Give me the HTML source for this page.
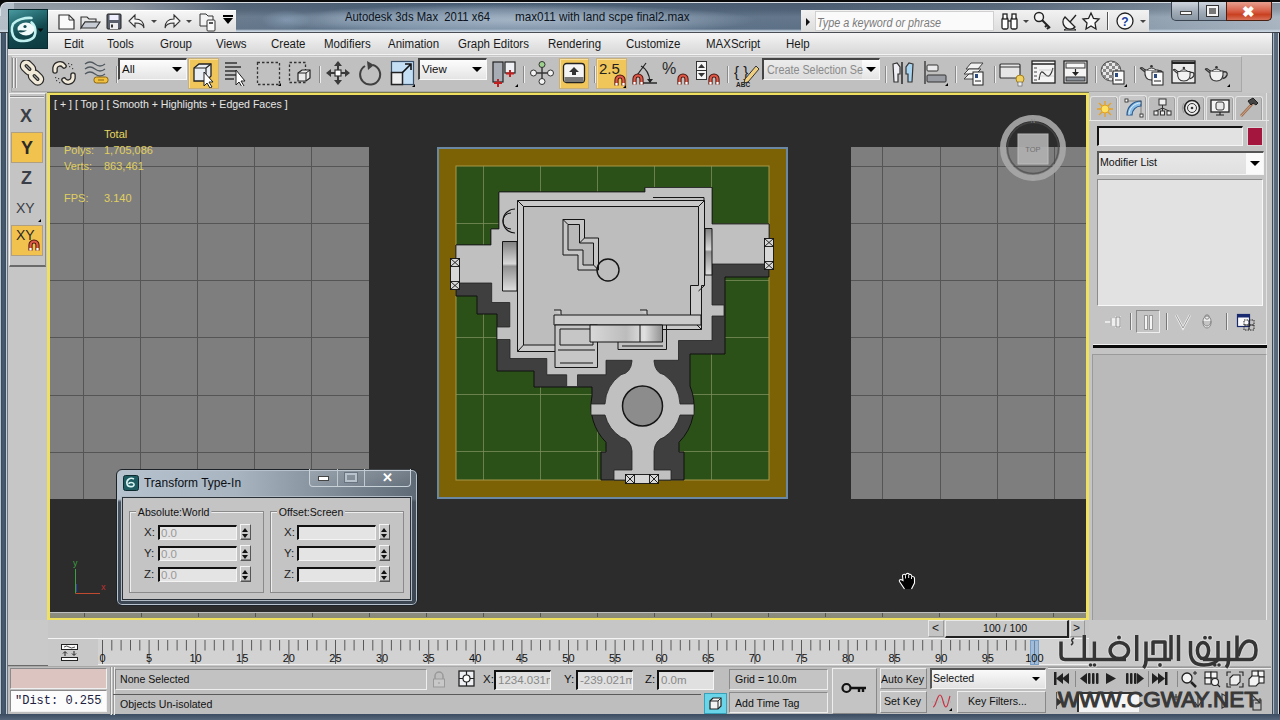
<!DOCTYPE html>
<html><head><meta charset="utf-8">
<style>
*{margin:0;padding:0;box-sizing:border-box}
html,body{width:1280px;height:720px;overflow:hidden;background:#0c0c0c}
body{position:relative;font-family:"Liberation Sans",sans-serif;font-size:12px;color:#111}
.a{position:absolute}
.t{position:absolute;white-space:nowrap;line-height:1;transform-origin:0 0}
.s9{transform:scaleX(0.9)}.s92{transform:scaleX(0.92)}.s95{transform:scaleX(0.95)}.s87{transform:scaleX(0.87)}
</style></head><body>
<!-- window frame -->
<div class="a" style="left:0;top:2px;width:1280px;height:718px;background:#9aa6b4;border-top:1px solid #d8dde3"></div>
<!-- title bar -->
<div class="a" id="title" style="left:0;top:3px;width:1280px;height:30px;background:linear-gradient(90deg,#b2bcc6 0px,#a6b0ba 130px,#627488 235px,#587088 420px,#5a6e84 800px,#6a7c90 1000px,#8e9eae 1160px,#a6b2be 1280px)"></div>
<div class="a" style="left:0;top:3px;width:1280px;height:30px;background:linear-gradient(rgba(20,30,45,0.22) 0,rgba(20,30,45,0.18) 6px,rgba(255,255,255,0.06) 14px,rgba(255,255,255,0.02) 26px,#c8d4e0 28px,#c8d4e0 29px,#3a4048 29px)"></div>
<div class="a" style="left:0;top:0;width:1280px;height:2px;background:#0a0a0a"></div>
<div class="a" style="left:0;top:2px;width:8px;height:8px;background:#0a0a0a"></div>
<div class="a" style="left:0;top:2px;width:14px;height:14px;border-radius:7px 0 0 0;background:#b4bec8;border-top:1px solid #dde2e8;border-left:1px solid #dde2e8"></div>
<div class="a" style="left:0;top:33px;width:8px;height:687px;background:linear-gradient(90deg,#b8c2cc 0,#b8c2cc 1px,#34465a 1px,#4a5c70 3px,#3c4e62 6px,#c4ccd4 6px,#c4ccd4 7px,#6a7682 7px)"></div>
<div class="a" style="left:1266px;top:33px;width:14px;height:687px;background:linear-gradient(90deg,#e2e2e2 0,#e2e2e2 1px,#c2c2c2 1px,#c2c2c2 6px,#404a54 6px,#404a54 7px,#a8b8c8 7px,#a8b8c8 8px,#5e6e7e 8px,#56667a 12px,#d0d8e0 12px,#d0d8e0 13px,#0a0a0a 13px)"></div>
<div class="a" style="left:0;top:714px;width:1280px;height:6px;background:linear-gradient(#3c4c60,#56677b)"></div>
<div class="a" style="left:236px;top:4px;width:565px;height:27px;background:radial-gradient(ellipse 240px 16px at 280px 16px,rgba(185,200,215,0.75),rgba(175,192,210,0.45) 65%,transparent),radial-gradient(ellipse 25px 10px at 50px 16px,rgba(150,175,200,0.5),transparent),radial-gradient(ellipse 30px 10px at 110px 14px,rgba(150,170,190,0.3),transparent)"></div>
<div class="t s87" style="left:345px;top:10px;font-size:13px;color:#0c1420">Autodesk 3ds Max&nbsp; 2011 x64</div>
<div class="t s9" style="left:515px;top:10px;font-size:13px;color:#0c1420">max011 with land scpe final2.max</div>
<!-- menu bar -->
<div class="a" style="left:8px;top:32px;width:1264px;height:1px;background:#4a4e54"></div><div class="a" style="left:8px;top:33px;width:1264px;height:22px;background:linear-gradient(#f6f6f6,#e6e6e6 50%,#d8d8d8);border-bottom:1px solid #f2f2f2"></div>

<!-- title bar details -->

<div class="a" style="left:8px;top:9px;width:40px;height:40px;background:linear-gradient(160deg,#4a9aa0 0%,#2a7278 25%,#12484e 55%,#0c3a40 100%);border:1px solid #0a2a30"></div>
<svg class="a" style="left:8px;top:9px" width="41" height="41" viewBox="0 0 41 41">
 <path d="M23.5,9 C17,8.5 8.5,10.5 5,15 C3,19 3.5,26 7,29.5 C11,33 21,33 25.5,28.5 C28.5,24.5 28,17 23.5,13.5" fill="none" stroke="#c0f0f0" stroke-width="2.6" stroke-linecap="round"/>
 <ellipse cx="18" cy="20" rx="8.5" ry="6.5" fill="#f0fafa"/>
 <path d="M9,22 C12,20.5 16,22 19,21.5 C15,24 11,24 9,22 Z" fill="#154a50"/>
 <circle cx="17" cy="17.5" r="1.6" fill="#154a50"/>
 <path d="M29.5,19.5 h6 l-3,3.5 z" fill="#0a0a0a"/>
</svg>
<div class="a" style="left:48px;top:10px;width:188px;height:22px;background:linear-gradient(#f6f6f6,#dedede);border-top:1px solid #fff"></div>
<div class="a" style="left:801px;top:10px;width:348px;height:22px;background:linear-gradient(#f2f2f2,#dcdcdc)"></div>
<div class="a" style="left:815px;top:11px;width:179px;height:20px;background:#fafafa;border:1px solid #d0d0d0"></div>
<div class="a" style="left:806px;top:18px;width:0;height:0;border-top:4px solid transparent;border-bottom:4px solid transparent;border-left:4px solid #111"></div>
<div class="t s9" style="left:817px;top:17px;font-size:12px;font-style:italic;color:#7a7a7a">Type a keyword or phrase</div>
<svg class="a" style="left:57px;top:12px" width="20" height="19" viewBox="0 0 20 19"><path d="M2,3 H12 L17,8 V17 H2 Z" fill="#fafafa" stroke="#333" stroke-width="1.2"/><path d="M12,3 V8 H17" fill="none" stroke="#333"/></svg>
<svg class="a" style="left:80px;top:12px" width="22" height="19" viewBox="0 0 22 19"><path d="M1,5 H7 L9,7 H16 V10 H5 L1,16 Z" fill="#e8e8e8" stroke="#333" stroke-width="1.1"/><path d="M5,10 H20 L16,16 H1 Z" fill="#c8ccd4" stroke="#333" stroke-width="1.1"/></svg>
<svg class="a" style="left:105px;top:12px" width="18" height="19" viewBox="0 0 18 19"><rect x="2" y="2" width="14" height="15" rx="1" fill="#5a606c" stroke="#222"/><rect x="4.5" y="3" width="9" height="5" fill="#eef"/><rect x="5" y="11" width="8" height="6" fill="#eee"/><rect x="6" y="12.5" width="2" height="3" fill="#333"/></svg>
<svg class="a" style="left:127px;top:12px" width="20" height="19" viewBox="0 0 20 19"><path d="M8,3 L2,9 L8,15 V11 C13,11 16,12 17,16 C17,10 14,7 8,7 Z" fill="#f4f4f4" stroke="#333" stroke-width="1.1"/></svg>
<div class="a" style="left:151px;top:20px;width:0;height:0;border-left:3px solid transparent;border-right:3px solid transparent;border-top:3px solid #444"></div>
<svg class="a" style="left:162px;top:12px" width="20" height="19" viewBox="0 0 20 19"><path d="M12,3 L18,9 L12,15 V11 C7,11 4,12 3,16 C3,10 6,7 12,7 Z" fill="#f4f4f4" stroke="#333" stroke-width="1.1"/></svg>
<div class="a" style="left:186px;top:20px;width:0;height:0;border-left:3px solid transparent;border-right:3px solid transparent;border-top:3px solid #444"></div>
<svg class="a" style="left:198px;top:11px" width="22" height="21" viewBox="0 0 22 21"><path d="M2,3 H8 L10,5 H15 V15 H2 Z" fill="#f4f4f4" stroke="#333"/><rect x="9" y="9" width="8" height="11" rx="1" fill="#f8f8f8" stroke="#333"/><rect x="11" y="11" width="4" height="2" fill="#555"/></svg>
<div class="a" style="left:223px;top:18px;width:0;height:0;border-left:5px solid transparent;border-right:5px solid transparent;border-top:6px solid #000;border-bottom:0"></div><div class="a" style="left:223px;top:15px;width:10px;height:2px;background:#000"></div>
<svg class="a" style="left:1000px;top:12px" width="22" height="19" viewBox="0 0 22 19"><g fill="#fff" stroke="#222" stroke-width="1.3"><rect x="2" y="6" width="6" height="11" rx="1.5"/><rect x="11" y="6" width="6" height="11" rx="1.5"/><rect x="3" y="2" width="4" height="5"/><rect x="12" y="2" width="4" height="5"/><path d="M8,9 H11"/></g></svg>
<div class="a" style="left:1023px;top:20px;width:0;height:0;border-left:3px solid transparent;border-right:3px solid transparent;border-top:3px solid #444"></div>
<svg class="a" style="left:1033px;top:11px" width="20" height="20" viewBox="0 0 20 20"><circle cx="6" cy="6" r="4.5" fill="#f4f4f4" stroke="#222" stroke-width="1.4"/><path d="M9,9 L17,17 M14,14 L12,16 M16,16 L14,18" stroke="#222" stroke-width="2"/></svg>
<svg class="a" style="left:1061px;top:11px" width="20" height="20" viewBox="0 0 20 20"><path d="M4,6 A7,7 0 0 0 14,16 Z" fill="#f4f4f4" stroke="#222" stroke-width="1.3"/><path d="M9,11 L15,4" stroke="#222" stroke-width="1.3"/><path d="M6,17 L3,19 H15 L12,17" fill="none" stroke="#222"/></svg>
<svg class="a" style="left:1081px;top:11px" width="20" height="20" viewBox="0 0 20 20"><path d="M10,2 L12.5,7.5 L18,8 L14,12 L15,18 L10,15 L5,18 L6,12 L2,8 L7.5,7.5 Z" fill="#fafafa" stroke="#222" stroke-width="1.3"/></svg>
<div class="a" style="left:1107px;top:12px;width:1px;height:18px;background:#555;box-shadow:1px 0 0 #fff"></div>
<svg class="a" style="left:1115px;top:11px" width="20" height="20" viewBox="0 0 20 20"><circle cx="10" cy="10" r="8" fill="#fafafa" stroke="#222" stroke-width="1.3"/><text x="10" y="14.5" font-size="12" font-weight="bold" text-anchor="middle" fill="#1a3ea0" font-family="Liberation Sans">?</text></svg>
<div class="a" style="left:1140px;top:20px;width:0;height:0;border-left:3px solid transparent;border-right:3px solid transparent;border-top:3px solid #444"></div>
<!-- caption buttons -->
<div class="a" style="left:1171px;top:2px;width:101px;height:19px;border:1px solid #3a4450;border-top:none;border-radius:0 0 5px 5px;background:linear-gradient(#d0d6de,#a4aeba 50%,#8a96a4)"></div>
<div class="a" style="left:1226px;top:2px;width:46px;height:19px;border:1px solid #4a2010;border-top:none;border-radius:0 0 5px 0;background:linear-gradient(#e8a090,#d86048 50%,#c84020 70%,#d87058)"></div>
<div class="a" style="left:1198px;top:2px;width:1px;height:18px;background:#3a4450"></div>
<div class="a" style="left:1180px;top:11px;width:12px;height:4px;background:#f8f8f8;border:1px solid #444"></div>
<div class="a" style="left:1207px;top:6px;width:11px;height:10px;border:2px solid #f4f4f4;outline:1px solid #333;background:#777"></div>
<div class="t" style="left:1242px;top:4px;font-size:15px;font-weight:bold;color:#fff">&#x2716;</div>
<!-- menu -->
<div class="t s92" style="left:64px;top:38px;font-size:12.5px;color:#1a1a1a">Edit</div>
<div class="t s92" style="left:107px;top:38px;font-size:12.5px;color:#1a1a1a">Tools</div>
<div class="t s92" style="left:160px;top:38px;font-size:12.5px;color:#1a1a1a">Group</div>
<div class="t s92" style="left:216px;top:38px;font-size:12.5px;color:#1a1a1a">Views</div>
<div class="t s92" style="left:271px;top:38px;font-size:12.5px;color:#1a1a1a">Create</div>
<div class="t s92" style="left:324px;top:38px;font-size:12.5px;color:#1a1a1a">Modifiers</div>
<div class="t s92" style="left:388px;top:38px;font-size:12.5px;color:#1a1a1a">Animation</div>
<div class="t s92" style="left:458px;top:38px;font-size:12.5px;color:#1a1a1a">Graph Editors</div>
<div class="t s92" style="left:548px;top:38px;font-size:12.5px;color:#1a1a1a">Rendering</div>
<div class="t s92" style="left:626px;top:38px;font-size:12.5px;color:#1a1a1a">Customize</div>
<div class="t s92" style="left:706px;top:38px;font-size:12.5px;color:#1a1a1a">MAXScript</div>
<div class="t s92" style="left:786px;top:38px;font-size:12.5px;color:#1a1a1a">Help</div>
<!-- main toolbar -->
<div class="a" style="left:8px;top:55px;width:1263px;height:38px;background:#c6c6c6"></div>
<div class="a" style="left:11px;top:56px;width:1231px;height:36px;background:#c0c0c0;border:1px solid #a8a8a8;border-top-color:#e0e0e0"></div>
<!-- toolbar icons -->
<div class="a" style="left:12px;top:58px;width:1px;height:30px;background:#888;box-shadow:1px 0 0 #eee,3px 0 0 #888,4px 0 0 #eee"></div>
<svg class="a" style="left:19px;top:60px" width="26" height="26" viewBox="0 0 26 26"><g fill="none" stroke="#2a2a2a" stroke-width="6"><rect x="3" y="4" width="12" height="7" rx="3.5" transform="rotate(45 9 7.5)"/><rect x="11" y="14" width="12" height="7" rx="3.5" transform="rotate(45 17 17.5)"/></g><g fill="none" stroke="#f2ead8" stroke-width="3.6"><rect x="3" y="4" width="12" height="7" rx="3.5" transform="rotate(45 9 7.5)"/><rect x="11" y="14" width="12" height="7" rx="3.5" transform="rotate(45 17 17.5)"/></g></svg>
<svg class="a" style="left:51px;top:60px" width="26" height="26" viewBox="0 0 26 26"><g fill="none" stroke="#2a2a2a" stroke-width="5.6" stroke-linecap="round"><path d="M4,11 V8 A5,5 0 0 1 13,6"/><path d="M22,15 V18 A5,5 0 0 1 13,20"/></g><g fill="none" stroke="#f2ead8" stroke-width="3" stroke-linecap="round"><path d="M4,11 V8 A5,5 0 0 1 13,6"/><path d="M22,15 V18 A5,5 0 0 1 13,20"/></g><g fill="#444"><rect x="17" y="3" width="1.2" height="1.2"/><rect x="20" y="4" width="1.2" height="1.2"/><rect x="18" y="6" width="1.2" height="1.2"/><rect x="21" y="8" width="1.2" height="1.2"/><rect x="4" y="17" width="1.2" height="1.2"/><rect x="7" y="18" width="1.2" height="1.2"/><rect x="5" y="20" width="1.2" height="1.2"/><rect x="8" y="22" width="1.2" height="1.2"/></g></svg>
<svg class="a" style="left:84px;top:60px" width="26" height="26" viewBox="0 0 26 26"><g fill="none" stroke="#505860" stroke-width="1.3"><path d="M1,4 Q6,0 11,4 T21,4"/><path d="M1,9 Q6,5 11,9 T21,9"/><path d="M1,14 Q6,10 11,14 T21,14"/></g><rect x="10" y="17" width="14" height="6" rx="2.5" fill="#f0c040" stroke="#8a6410" stroke-width="1"/><path d="M14,20 h6" stroke="#8a6410"/></svg>
<div class="a" style="left:116px;top:66px;width:1px;height:17px;background:#8a8a8a;box-shadow:1px 0 0 #eee"></div>
<div class="a" style="left:118px;top:58px;width:69px;height:22px;background:linear-gradient(#fdfdfd,#e4e4e4);border-top:2px solid #444;border-left:2px solid #444;border-right:1px solid #f8f8f8;border-bottom:1px solid #f8f8f8"></div>
<div class="t" style="left:122px;top:64px;font-size:11.5px;color:#111">All</div>
<div class="a" style="left:172px;top:67px;width:0;height:0;border-left:5px solid transparent;border-right:5px solid transparent;border-top:5px solid #000"></div>
<div class="a" style="left:188px;top:58px;width:31px;height:31px;background:#f0c65a;border:1px solid #c8b078;box-shadow:inset 1px 1px 0 #f8e0a0"></div>
<svg class="a" style="left:190px;top:60px" width="28" height="28" viewBox="0 0 28 28"><path d="M4,8 L9,4 H21 V16 L16,21 H4 Z" fill="#e8eef4" stroke="#222" stroke-width="1.3"/><path d="M4,8 H16 V21 M16,8 L21,4" fill="none" stroke="#222" stroke-width="1.2"/><path d="M14,12 V26 L17,23 L20,28 L22,27 L19,22 L23,22 Z" fill="#fff" stroke="#222" stroke-width="1"/></svg>
<svg class="a" style="left:224px;top:60px" width="26" height="26" viewBox="0 0 26 26"><g stroke="#333" stroke-width="1.3"><path d="M1,3 H13 M1,7 H17 M1,11 H12 M1,15 H15 M1,19 H10"/></g><path d="M12,10 V25 L15,22 L18,27 L20,26 L17,21 L21,21 Z" fill="#fff" stroke="#222" stroke-width="1"/></svg>
<svg class="a" style="left:256px;top:61px" width="26" height="26" viewBox="0 0 26 26"><rect x="1.5" y="1.5" width="22" height="22" fill="none" stroke="#333" stroke-width="1.3" stroke-dasharray="2.5,2"/><path d="M22,25 l3,0 l0,-3 z" fill="#000"/></svg>
<svg class="a" style="left:288px;top:61px" width="26" height="26" viewBox="0 0 26 26"><rect x="1.5" y="1.5" width="16" height="20" fill="none" stroke="#333" stroke-width="1.3" stroke-dasharray="2.5,2"/><path d="M10,12 L14,9 H22 V17 L18,20 H10 Z" fill="#eaeaea" stroke="#222" stroke-width="1.2"/><path d="M10,12 H18 V20 M18,12 L22,9" fill="none" stroke="#222"/></svg>
<div class="a" style="left:319px;top:66px;width:1px;height:17px;background:#8a8a8a;box-shadow:1px 0 0 #eee"></div>
<svg class="a" style="left:326px;top:61px" width="24" height="24" viewBox="0 0 24 24"><g fill="#3a3a3a"><path d="M12,0 L16,5 H8 Z"/><path d="M12,24 L16,19 H8 Z"/><path d="M0,12 L5,8 V16 Z"/><path d="M24,12 L19,8 V16 Z"/><rect x="11" y="4" width="2" height="16"/><rect x="4" y="11" width="16" height="2"/></g><rect x="9" y="9" width="6" height="6" fill="#fff" stroke="#333" stroke-width="1.2"/></svg>
<svg class="a" style="left:357px;top:60px" width="25" height="26" viewBox="0 0 25 26"><path d="M8,6 A10,10 0 1 0 16,5" fill="none" stroke="#404040" stroke-width="2"/><path d="M10,1 L17,5 L11,10 Z" fill="#404040"/></svg>
<svg class="a" style="left:390px;top:60px" width="26" height="28" viewBox="0 0 26 28"><rect x="1.5" y="1.5" width="22" height="23" fill="#c4def4" stroke="#3a5068" stroke-width="1.2"/><rect x="1.5" y="12.5" width="11" height="12" fill="#eee" stroke="#222" stroke-width="1.5"/><path d="M12,13 L21,4 M15,4 H21 V10" fill="none" stroke="#111" stroke-width="1.6"/><path d="M22,27 l3,0 l0,-3 z" fill="#000"/></svg>
<div class="a" style="left:418px;top:58px;width:69px;height:22px;background:linear-gradient(#fdfdfd,#e4e4e4);border-top:2px solid #444;border-left:2px solid #444;border-right:1px solid #f8f8f8;border-bottom:1px solid #f8f8f8"></div>
<div class="t" style="left:422px;top:64px;font-size:11.5px;color:#111">View</div>
<div class="a" style="left:472px;top:67px;width:0;height:0;border-left:5px solid transparent;border-right:5px solid transparent;border-top:5px solid #000"></div>
<svg class="a" style="left:491px;top:60px" width="30" height="28" viewBox="0 0 30 28"><rect x="2" y="2" width="10" height="20" fill="#a8acb4" stroke="#222" stroke-width="1.2"/><rect x="14" y="2" width="10" height="11" fill="#eef0f4" stroke="#222" stroke-width="1.2"/><g stroke="#c02020" stroke-width="2"><path d="M7,19 v8 M3,23 h8"/><path d="M19,10 v7 M15,13.5 h8"/></g><path d="M24,27 l3,0 l0,-3 z" fill="#000"/></svg>
<div class="a" style="left:523px;top:66px;width:1px;height:17px;background:#8a8a8a;box-shadow:1px 0 0 #eee"></div>
<svg class="a" style="left:530px;top:61px" width="24" height="24" viewBox="0 0 24 24"><path d="M12,4 V20 M3,12 H21" stroke="#333" stroke-width="1.4"/><circle cx="12" cy="3.5" r="3" fill="#9cd08c" stroke="#333"/><circle cx="3.5" cy="12" r="3" fill="#f4f4f4" stroke="#333"/><circle cx="20.5" cy="12" r="3" fill="#f4f4f4" stroke="#333"/><circle cx="12" cy="20.5" r="3" fill="#f4f4f4" stroke="#333"/></svg>
<div class="a" style="left:559px;top:58px;width:30px;height:31px;background:#f0c65a;border:1px solid #c8b078;box-shadow:inset 1px 1px 0 #f8e0a0"></div>
<svg class="a" style="left:562px;top:62px" width="25" height="23" viewBox="0 0 25 23"><rect x="1.5" y="1.5" width="21" height="19" rx="3" fill="#f4f4f4" stroke="#222" stroke-width="1.3"/><rect x="2.5" y="15" width="19" height="5" fill="#777"/><path d="M12,5 L17,10 H14 V13 H10 V10 H7 Z" fill="#333"/></svg>
<div class="a" style="left:594px;top:66px;width:1px;height:17px;background:#8a8a8a;box-shadow:1px 0 0 #eee"></div>
<div class="a" style="left:596px;top:58px;width:31px;height:31px;background:#f0c65a;border:1px solid #c8b078;box-shadow:inset 1px 1px 0 #f8e0a0"></div>
<div class="t" style="left:599px;top:61px;font-size:15px;color:#222">2.5</div>
<svg class="a" style="left:614px;top:74px" width="12" height="13" viewBox="0 0 12 13"><path d="M2.5,11.5 V6 A3.5,3.5 0 0 1 9.5,6 V11.5" fill="none" stroke="#4a1810" stroke-width="4.2"/><path d="M2.5,11.5 V6 A3.5,3.5 0 0 1 9.5,6 V11.5" fill="none" stroke="#e05848" stroke-width="2.2"/><path d="M2.5,9 V11.5 M9.5,9 V11.5" stroke="#fff" stroke-width="2.2"/></svg>
<div class="a" style="left:623px;top:85px;width:0;height:0;border-left:3px solid transparent;border-bottom:3px solid #000"></div>
<svg class="a" style="left:632px;top:60px" width="26" height="26" viewBox="0 0 26 26"><path d="M3,18 L14,3" stroke="#222" stroke-width="1.2"/><path d="M9,6 Q17,10 18,22" fill="none" stroke="#222" stroke-width="1.2"/><path d="M15,19 L18,23 L21,19" fill="#222"/><path d="M11,23 H25" stroke="#111" stroke-width="1.3"/></svg>
<svg class="a" style="left:632px;top:73px" width="12" height="13" viewBox="0 0 12 13"><path d="M2.5,11.5 V6 A3.5,3.5 0 0 1 9.5,6 V11.5" fill="none" stroke="#4a1810" stroke-width="4.2"/><path d="M2.5,11.5 V6 A3.5,3.5 0 0 1 9.5,6 V11.5" fill="none" stroke="#e05848" stroke-width="2.2"/><path d="M2.5,9 V11.5 M9.5,9 V11.5" stroke="#fff" stroke-width="2.2"/></svg>
<div class="t" style="left:662px;top:61px;font-size:16px;color:#2a2a2a">%</div>
<svg class="a" style="left:677px;top:73px" width="12" height="13" viewBox="0 0 12 13"><path d="M2.5,11.5 V6 A3.5,3.5 0 0 1 9.5,6 V11.5" fill="none" stroke="#4a1810" stroke-width="4.2"/><path d="M2.5,11.5 V6 A3.5,3.5 0 0 1 9.5,6 V11.5" fill="none" stroke="#e05848" stroke-width="2.2"/><path d="M2.5,9 V11.5 M9.5,9 V11.5" stroke="#fff" stroke-width="2.2"/></svg>
<svg class="a" style="left:696px;top:61px" width="12" height="20" viewBox="0 0 12 20"><rect x="0.5" y="0.5" width="10" height="18" fill="#f4f4f4" stroke="#333"/><path d="M0,9.5 H11" stroke="#333"/><path d="M2,7 L5.5,3 L9,7 Z M2,12 L5.5,16 L9,12 Z" fill="#333"/></svg>
<svg class="a" style="left:708px;top:73px" width="12" height="13" viewBox="0 0 12 13"><path d="M2.5,11.5 V6 A3.5,3.5 0 0 1 9.5,6 V11.5" fill="none" stroke="#4a1810" stroke-width="4.2"/><path d="M2.5,11.5 V6 A3.5,3.5 0 0 1 9.5,6 V11.5" fill="none" stroke="#e05848" stroke-width="2.2"/><path d="M2.5,9 V11.5 M9.5,9 V11.5" stroke="#fff" stroke-width="2.2"/></svg>
<div class="a" style="left:727px;top:66px;width:1px;height:17px;background:#8a8a8a;box-shadow:1px 0 0 #eee"></div>
<svg class="a" style="left:734px;top:60px" width="26" height="28" viewBox="0 0 26 28"><text x="0" y="17" font-size="15" fill="#222" font-family="Liberation Sans">{ }</text><path d="M11,19 L22,6 L25,9 L14,22 L10,23 Z" fill="#f0d080" stroke="#333"/><text x="2" y="27" font-size="6.5" font-weight="bold" fill="#222" font-family="Liberation Sans">ABC</text></svg>
<div class="a" style="left:762px;top:58px;width:118px;height:22px;background:linear-gradient(#fdfdfd,#e4e4e4);border-top:2px solid #444;border-left:2px solid #444;border-right:1px solid #f8f8f8;border-bottom:1px solid #f8f8f8"></div>
<div class="a" style="left:764px;top:60px;width:98px;height:19px;background:linear-gradient(#ececec,#dcdcdc)"></div><div class="t" style="left:767px;top:64px;font-size:12px;color:#8a8a8a;transform:scaleX(0.9)">Create Selection Se</div>
<div class="a" style="left:866px;top:67px;width:0;height:0;border-left:5px solid transparent;border-right:5px solid transparent;border-top:5px solid #000"></div>
<div class="a" style="left:885px;top:66px;width:1px;height:17px;background:#8a8a8a;box-shadow:1px 0 0 #eee"></div>
<svg class="a" style="left:891px;top:61px" width="26" height="24" viewBox="0 0 26 24"><path d="M2,3 L6,2 L9,6 V13 L7,13 V21 H3 Z" fill="#f0f0f4" stroke="#333" stroke-width="1.2"/><path d="M11,1 V23" stroke="#111" stroke-width="1.3"/><path d="M22,3 L18,2 L15,6 V13 L17,13 V21 H21 Z" fill="#a8d4f0" stroke="#333" stroke-width="1.2"/></svg>
<svg class="a" style="left:924px;top:61px" width="26" height="26" viewBox="0 0 26 26"><path d="M1,0 V23" stroke="#222" stroke-width="1.2"/><rect x="3" y="4" width="11" height="6" rx="1" fill="#eaeaec" stroke="#333"/><rect x="3" y="14" width="19" height="7" rx="1" fill="#9a9ca4" stroke="#333"/><path d="M21,25 l3,0 l0,-3 z" fill="#000"/></svg>
<div class="a" style="left:955px;top:66px;width:1px;height:17px;background:#8a8a8a;box-shadow:1px 0 0 #eee"></div>
<svg class="a" style="left:961px;top:60px" width="26" height="28" viewBox="0 0 26 28"><g fill="#f2f2f2" stroke="#444"><path d="M5,9 L10,3 H22 L17,9 Z"/><path d="M3,14 L8,9 H20 L15,14 Z"/><path d="M3,19 L8,14 H20 L15,19 Z"/></g><rect x="12" y="12" width="10" height="13" fill="#fafafa" stroke="#222"/><rect x="14" y="14" width="3" height="4" fill="#2a4a80"/><path d="M14,21 H20" stroke="#222"/></svg>
<div class="a" style="left:994px;top:66px;width:1px;height:17px;background:#8a8a8a;box-shadow:1px 0 0 #eee"></div>
<svg class="a" style="left:999px;top:60px" width="26" height="28" viewBox="0 0 26 28"><rect x="1" y="4" width="20" height="14" rx="1" fill="#e6e6e6" stroke="#333" stroke-width="1.2"/><path d="M1,7 H21" stroke="#333"/><circle cx="21" cy="19" r="4" fill="#f0d060" stroke="#a08020"/><rect x="19" y="22" width="4" height="4" fill="#eee" stroke="#555" stroke-width="0.6"/></svg>
<svg class="a" style="left:1031px;top:60px" width="26" height="26" viewBox="0 0 26 26"><rect x="1" y="1" width="23" height="22" fill="#f4f4f4" stroke="#222" stroke-width="1.3"/><path d="M1,4 H24" stroke="#222" stroke-width="1.5"/><g stroke="#444"><path d="M3,8 h3 M3,12 h3 M3,16 h3 M3,20 h3"/></g><path d="M8,20 C11,-2 16,30 22,8" fill="none" stroke="#333" stroke-width="1.1"/><path d="M8,10 H23 M8,16 H23" stroke="#bbb" stroke-width="0.6"/></svg>
<svg class="a" style="left:1063px;top:60px" width="26" height="26" viewBox="0 0 26 26"><rect x="1" y="1" width="23" height="22" fill="#f4f4f4" stroke="#222" stroke-width="1.3"/><rect x="3" y="3" width="19" height="5" fill="#f8f8f8" stroke="#333"/><path d="M12.5,9 V14" stroke="#222" stroke-width="1.2"/><path d="M9,12 L12.5,16 L16,12 Z" fill="#222"/><rect x="3" y="17" width="19" height="4" fill="#8a9098" stroke="#333"/></svg>
<div class="a" style="left:1095px;top:66px;width:1px;height:17px;background:#8a8a8a;box-shadow:1px 0 0 #eee"></div>
<svg class="a" style="left:1100px;top:60px" width="28" height="28" viewBox="0 0 28 28"><defs><pattern id="chk" width="6" height="6" patternUnits="userSpaceOnUse"><rect width="6" height="6" fill="#e8e8e8"/><rect width="3" height="3" fill="#888"/><rect x="3" y="3" width="3" height="3" fill="#888"/></pattern></defs><circle cx="11" cy="11" r="10" fill="url(#chk)" stroke="#555"/><rect x="13" y="11" width="11" height="13" fill="#fafafa" stroke="#222"/><rect x="15" y="13" width="3" height="4" fill="#2a4a80"/><path d="M15,20 H22" stroke="#222"/><path d="M24,27 l3,0 l0,-3 z" fill="#000"/></svg>
<div class="a" style="left:1134px;top:66px;width:1px;height:17px;background:#8a8a8a;box-shadow:1px 0 0 #eee"></div>
<svg class="a" style="left:1139px;top:60px" width="28" height="28" viewBox="0 0 28 28"><g transform="translate(0,2) scale(1.0)"><path d="M1,6 L6,10 M1,6 L3,5.5 L7,8.5" fill="none" stroke="#333" stroke-width="1.1"/><path d="M19,9 Q24,8 23,12 Q22,15 18.5,15.5" fill="none" stroke="#333" stroke-width="1.4"/><path d="M6,8 Q5,18 12.5,18 Q20,18 19,8 Z" fill="#f2f2f2" stroke="#333" stroke-width="1.1"/><path d="M8,8 Q12.5,4 17,8" fill="#e8e8e8" stroke="#333" stroke-width="1"/><circle cx="12.5" cy="4.3" r="1.3" fill="#333"/></g><rect x="13" y="12" width="11" height="13" fill="#fafafa" stroke="#222"/><rect x="15" y="14" width="3" height="4" fill="#2a4a80"/><path d="M15,21 H22" stroke="#222"/></svg>
<svg class="a" style="left:1171px;top:60px" width="26" height="26" viewBox="0 0 26 26"><rect x="1" y="1" width="23" height="22" fill="#eaeaea" stroke="#222" stroke-width="1.3"/><path d="M1,3 H24" stroke="#222" stroke-width="2"/><g transform="translate(1,4) scale(0.95)"><path d="M1,6 L6,10 M1,6 L3,5.5 L7,8.5" fill="none" stroke="#333" stroke-width="1.1"/><path d="M19,9 Q24,8 23,12 Q22,15 18.5,15.5" fill="none" stroke="#333" stroke-width="1.4"/><path d="M6,8 Q5,18 12.5,18 Q20,18 19,8 Z" fill="#f2f2f2" stroke="#333" stroke-width="1.1"/><path d="M8,8 Q12.5,4 17,8" fill="#e8e8e8" stroke="#333" stroke-width="1"/><circle cx="12.5" cy="4.3" r="1.3" fill="#333"/></g></svg>
<svg class="a" style="left:1203px;top:61px" width="28" height="28" viewBox="0 0 28 28"><g transform="translate(1,2) scale(1.0)"><path d="M1,6 L6,10 M1,6 L3,5.5 L7,8.5" fill="none" stroke="#333" stroke-width="1.1"/><path d="M19,9 Q24,8 23,12 Q22,15 18.5,15.5" fill="none" stroke="#333" stroke-width="1.4"/><path d="M6,8 Q5,18 12.5,18 Q20,18 19,8 Z" fill="#f2f2f2" stroke="#333" stroke-width="1.1"/><path d="M8,8 Q12.5,4 17,8" fill="#e8e8e8" stroke="#333" stroke-width="1"/><circle cx="12.5" cy="4.3" r="1.3" fill="#333"/></g><path d="M24,26 l3,0 l0,-3 z" fill="#000"/></svg>
<!-- left axis bar -->
<div class="a" style="left:8px;top:93px;width:40px;height:527px;background:#c6c6c6"></div>

<div class="a" style="left:9px;top:93px;width:37px;height:174px;border:1px solid #f0f0f0;border-right-color:#8a8a8a;border-bottom:2px solid #6a6a6a;background:#c4c4c4"></div><div class="a" style="left:10px;top:96px;width:34px;height:1px;background:#8a8a8a;box-shadow:0 1px 0 #eee"></div>
<div class="t" style="left:20px;top:107px;font-size:18px;font-weight:bold;color:#3a3e46">X</div>
<div class="a" style="left:11px;top:132px;width:32px;height:31px;background:#f2c24e;border:1px solid #b0a080"></div>
<div class="t" style="left:21px;top:139px;font-size:18px;font-weight:bold;color:#2a2a2a">Y</div>
<div class="t" style="left:21px;top:169px;font-size:18px;font-weight:bold;color:#3a3e46">Z</div>
<div class="t" style="left:16px;top:201px;font-size:14px;color:#3a3e46">XY</div>
<div class="a" style="left:38px;top:219px;width:0;height:0;border-left:3px solid transparent;border-bottom:3px solid #000"></div>
<div class="a" style="left:11px;top:225px;width:32px;height:31px;background:#f2c24e;border:1px solid #b0a080"></div>
<div class="t" style="left:16px;top:228px;font-size:14px;color:#2a2a2a">XY</div>
<svg class="a" style="left:28px;top:239px" width="12" height="13" viewBox="0 0 12 13"><path d="M2.5,11.5 V6 A3.5,3.5 0 0 1 9.5,6 V11.5" fill="none" stroke="#4a1810" stroke-width="4.2"/><path d="M2.5,11.5 V6 A3.5,3.5 0 0 1 9.5,6 V11.5" fill="none" stroke="#e05848" stroke-width="2.2"/><path d="M2.5,9 V11.5 M9.5,9 V11.5" stroke="#fff" stroke-width="2.2"/></svg>
<!-- viewport -->
<div class="a" style="left:47px;top:92px;width:1042px;height:1px;background:#7a7a48"></div><div class="a" style="left:47px;top:93px;width:1042px;height:527px;background:#f0e060"></div>
<div class="a" id="vp" style="left:50px;top:95px;width:1036px;height:522px;background:#2c2c2c;overflow:hidden"></div>

<!-- viewport content -->
<div class="a" style="left:50px;top:147px;width:319px;height:352px;background:#7e7e7e;
background-image:linear-gradient(90deg,transparent 33px,#555 33px,#555 34px,transparent 34px),
linear-gradient(90deg,transparent 90px,#555 90px,#555 91px,transparent 91px),
linear-gradient(90deg,transparent 147px,#555 147px,#555 148px,transparent 148px),
linear-gradient(90deg,transparent 204px,#555 204px,#555 205px,transparent 205px),
linear-gradient(90deg,transparent 261px,#555 261px,#555 262px,transparent 262px),
linear-gradient(transparent 19px,#555 19px,#555 20px,transparent 20px),
linear-gradient(transparent 76px,#555 76px,#555 77px,transparent 77px),
linear-gradient(transparent 133px,#555 133px,#555 134px,transparent 134px),
linear-gradient(transparent 190px,#555 190px,#555 191px,transparent 191px),
linear-gradient(transparent 248px,#555 248px,#555 249px,transparent 249px),
linear-gradient(transparent 305px,#555 305px,#555 306px,transparent 306px)"></div>
<div class="a" style="left:851px;top:147px;width:235px;height:352px;background:#7e7e7e;
background-image:linear-gradient(90deg,transparent 31px,#555 31px,#555 32px,transparent 32px),
linear-gradient(90deg,transparent 89px,#555 89px,#555 90px,transparent 90px),
linear-gradient(90deg,transparent 146px,#555 146px,#555 147px,transparent 147px),
linear-gradient(90deg,transparent 203px,#555 203px,#555 204px,transparent 204px),
linear-gradient(transparent 19px,#555 19px,#555 20px,transparent 20px),
linear-gradient(transparent 76px,#555 76px,#555 77px,transparent 77px),
linear-gradient(transparent 133px,#555 133px,#555 134px,transparent 134px),
linear-gradient(transparent 190px,#555 190px,#555 191px,transparent 191px),
linear-gradient(transparent 248px,#555 248px,#555 249px,transparent 249px),
linear-gradient(transparent 305px,#555 305px,#555 306px,transparent 306px)"></div>
<svg class="a" style="left:0;top:0" width="1280" height="720" viewBox="0 0 1280 720">
 <rect x="437" y="147" width="351" height="352" fill="#1c2c48"/><rect x="438" y="148" width="349" height="350" fill="#7c6204" stroke="#6a88a4" stroke-width="2"/>
 <rect x="456" y="166" width="313" height="314" fill="#2b5118" stroke="#a89848" stroke-width="1"/>
 <g stroke="#8a9868" stroke-width="0.8" opacity="0.85">
  <line x1="483.5" y1="166" x2="483.5" y2="480"/><line x1="540.5" y1="166" x2="540.5" y2="480"/>
  <line x1="597.5" y1="166" x2="597.5" y2="480"/><line x1="654.5" y1="166" x2="654.5" y2="480"/>
  <line x1="711.5" y1="166" x2="711.5" y2="480"/>
  <line x1="456" y1="223.5" x2="769" y2="223.5"/><line x1="456" y1="280.5" x2="769" y2="280.5"/>
  <line x1="456" y1="337.5" x2="769" y2="337.5"/><line x1="456" y1="394.5" x2="769" y2="394.5"/>
  <line x1="456" y1="451.5" x2="769" y2="451.5"/>
 </g>
 <!-- dark footprint -->
 <path fill="#3f3f3f" stroke="#111" stroke-width="1" d="M499,192 H645 V187.5 H712 V224 H769 V277 H725 V354 H690 V386 A51.5,51.5 0 0 1 679,442.3 V452 H684 V480 H601 V452 H606 V442.3 A51.5,51.5 0 0 1 592,395.9 V387 H534 V371 H497 V314 H477 V296 H456 V245 H491 V229 H499 Z"/>
 <!-- light footprint -->
 <path fill="#c0c0c0" stroke="#222" stroke-width="0.8" d="M499,192 H645 V187.5 H712 V224 H769 V264 H712 V305 H724 V316 H712 V340.5 H678.5 V360.3 H654 V361 Q655,373 664,374.7 A38,38 0 0 1 680,404 H694 V415 H680 A38,38 0 0 1 664,437.3 Q655,440 654,451 V470 H671 V480 H614 V470 H632 V451 Q631,440 621,437.3 A38,38 0 0 1 605,415 H591 V404 H605 A38,38 0 0 1 621,374.7 Q631,373 632,361 V360.3 H606 V374.8 H577.5 V386.5 H566.7 V374.8 H546.8 V358.5 H510 V339.5 H497 V327 H509.8 V302.5 H491.7 V283 H456 V245 H491 V229 H499 Z"/>
 <circle cx="642.5" cy="406" r="20" fill="#8c8c8c" stroke="#151515" stroke-width="1.5"/>
 <!-- building -->
 <g stroke="#151515" stroke-width="1" fill="none">
  <path d="M517.5,200.5 H704.5 V285.5 H701.5 V329.5 H563 V351.5 H517.5 Z" fill="#cacaca"/>
  <path d="M523.5,206.5 H698.5 V285.5 H690.5 V318.5 H557 V345 H523.5 Z" fill="#bdbdbd"/>
  <path d="M517.5,200.5 L523.5,206.5 M704.5,200.5 L698.5,206.5 M517.5,351.5 L523.5,345 M701.5,329.5 L690.5,318.5 M704.5,285.5 L698.5,291"/>
  <path d="M653,197.5 H704 V200.5" />
  <path d="M563,219.5 H584.5 V238 H598.5 V270 H578 V255 H563 Z" fill="#c6c6c6"/>
  <path d="M568,224.5 H579.5 V243 H593.5 V265 H583 V250 H568 Z" fill="#b8b8b8"/>
  <path d="M563,219.5 L568,224.5 M598.5,270 L593.5,265 M584.5,238 L579.5,243"/>
  <circle cx="608" cy="270" r="11" stroke-width="1.4"/>
  <path d="M554,315 H701 V325 H554 Z" fill="#cccccc"/>
  <path d="M554,310 H561 V315 M640,310 H647 V315" fill="#ccc"/>
  <path d="M555,325 H597.5 V367.5 H555 Z" fill="#c6c6c6"/>
  <path d="M560,329 H593 V345 H560 Z M558,350 H595 M560,363 H593"/>
  <path d="M590,325 H662.5 V342 H590 Z" fill="url(#gblk)"/>
  <path d="M640,325 V342 M618,342 V349.5 H666.5 V325 M622,346 H663"/>
  <path d="M502.5,241.5 H517 V291 H502.5 Z" fill="url(#gside)"/>
  <path d="M705,228.5 H712 V275 H705 Z" fill="url(#gside)"/>
  <path d="M515,209 A12,12 0 0 0 515,233" stroke-width="1.2"/>
  <path d="M511,213 A8,8 0 0 0 511,229"/>
 </g>
 <defs>
  <linearGradient id="gblk" x1="0" x2="1"><stop offset="0" stop-color="#d8d8d8"/><stop offset="0.5" stop-color="#bcbcbc"/><stop offset="0.75" stop-color="#e0e0e0"/><stop offset="1" stop-color="#909090"/></linearGradient>
  <linearGradient id="gside" x1="0" x2="0" y1="0" y2="1"><stop offset="0" stop-color="#808080"/><stop offset="0.45" stop-color="#d8d8d8"/><stop offset="0.5" stop-color="#909090"/><stop offset="1" stop-color="#e0e0e0"/></linearGradient>
 </defs>
 <g fill="#d8d8d8" stroke="#111" stroke-width="0.9">
  <rect x="450.5" y="258.5" width="9" height="31"/>
  <rect x="450.5" y="258.5" width="9" height="8"/><rect x="450.5" y="281.5" width="9" height="8"/>
  <path d="M450.5,258.5 l9,8 m0,-8 l-9,8 M450.5,281.5 l9,8 m0,-8 l-9,8"/>
  <rect x="764.5" y="238.5" width="9" height="31"/>
  <rect x="764.5" y="238.5" width="9" height="8"/><rect x="764.5" y="261.5" width="9" height="8"/>
  <path d="M764.5,238.5 l9,8 m0,-8 l-9,8 M764.5,261.5 l9,8 m0,-8 l-9,8"/>
  <rect x="625.5" y="474.5" width="33" height="9"/>
  <rect x="625.5" y="474.5" width="9" height="9"/><rect x="649.5" y="474.5" width="9" height="9"/>
  <path d="M625.5,474.5 l9,9 m0,-9 l-9,9 M649.5,474.5 l9,9 m0,-9 l-9,9"/>
 </g>
</svg>

<!-- viewport labels -->
<div class="t s92" style="left:54px;top:99px;font-size:11.5px;color:#e6e6e6;letter-spacing:0px">[ + ] [ Top ] [ Smooth + Highlights + Edged Faces ]</div>
<div class="t" style="left:104px;top:129px;font-size:11px;color:#e8d860">Total</div>
<div class="t" style="left:64px;top:145px;font-size:11px;color:#e0d060">Polys:</div>
<div class="t" style="left:104px;top:145px;font-size:11px;color:#e0d060">1,705,086</div>
<div class="t" style="left:64px;top:161px;font-size:11px;color:#e0d060">Verts:</div>
<div class="t" style="left:104px;top:161px;font-size:11px;color:#e0d060">863,461</div>
<div class="t" style="left:64px;top:193px;font-size:11px;color:#e0d060">FPS:</div>
<div class="t" style="left:104px;top:193px;font-size:11px;color:#e0d060">3.140</div>
<!-- viewcube -->
<svg class="a" style="left:990px;top:110px" width="90" height="80" viewBox="0 0 90 80">
 <circle cx="43" cy="38" r="30" fill="none" stroke="#a8a8a8" stroke-width="6" opacity="0.9"/>
 <circle cx="43" cy="38" r="25.5" fill="none" stroke="#4a4a4a" stroke-width="1.5" opacity="0.7"/>
 <rect x="28" y="24" width="30" height="30" fill="#b0b0b0" stroke="#c4c4c4" opacity="0.92"/>
 <text x="43" y="42" font-size="7.5" text-anchor="middle" fill="#707070" font-family="Liberation Sans">TOP</text>
 <text x="43" y="13" font-size="6" text-anchor="middle" fill="#888" font-family="Liberation Sans">N</text>
 <text x="43" y="70" font-size="6" text-anchor="middle" fill="#aaa" font-family="Liberation Sans">S</text>
</svg>
<!-- axis tripod -->
<svg class="a" style="left:68px;top:554px" width="44" height="44" viewBox="0 0 44 44">
 <line x1="7.5" y1="39.5" x2="7.5" y2="15" stroke="#3aa040" stroke-width="1"/>
 <line x1="7.5" y1="39.5" x2="32" y2="39.5" stroke="#c04a30" stroke-width="1"/>
 <line x1="8.5" y1="30" x2="8.5" y2="38" stroke="#3040a0" stroke-width="1"/>
 <text x="5" y="12" font-size="9" fill="#3aa040" font-family="Liberation Sans">y</text>
 <text x="33" y="36" font-size="9" fill="#c03030" font-family="Liberation Sans">x</text>
</svg>
<!-- hand cursor -->
<svg class="a" style="left:890px;top:565px" width="35" height="35" viewBox="890 565 35 35">
 <path d="M904.5,589 L899.5,581.5 Q898.8,579.5 901,579.5 L903,580.5 L902.5,576 Q902.5,574 904.5,574.3 L905.5,575 Q906.5,573 908.5,573.5 L909.5,574.5 Q911.5,574 911.5,576 L912.5,576.5 Q914.5,576.5 914.5,578.5 L914.5,583 L911.5,589" fill="#000" stroke="#fff" stroke-width="1.1"/>
 <path d="M905.5,575.5 V578.5 M908.7,574.5 V578 M911.5,576.5 V579" stroke="#fff" stroke-width="0.9"/>
</svg>
<!-- dialog -->
<div class="a" style="left:116px;top:469px;width:302px;height:137px;border-radius:6px;border:1px solid #1c2228;box-shadow:inset 0 0 0 1px #b8c2cc;background:linear-gradient(to bottom,transparent 0,transparent 29px,#48525e 32px,#3c4652 100%),linear-gradient(90deg,#b6c2ce 0%,#a8b4c0 40%,#7c8894 75%,#5e6a76 100%)"></div>
<div class="a" style="left:122px;top:497px;width:289px;height:103px;background:#c4c4c4;border:1px solid #2a3038;box-shadow:0 0 0 1px #b0bac4"></div>
<svg class="a" style="left:123px;top:475px" width="16" height="16" viewBox="0 0 16 16">
 <rect x="0.5" y="0.5" width="15" height="15" rx="2" fill="#1e5c62" stroke="#0e2c30"/>
 <path d="M11,4 C7,2 3,5 4,9 C5,13 12,12 11,9 C10,7 6,7 6,9" fill="none" stroke="#d8f4f4" stroke-width="1.6"/>
</svg>
<div class="t s92" style="left:144px;top:476px;font-size:13px;color:#0a0e14">Transform Type-In</div>
<div class="a" style="left:309px;top:469px;width:102px;height:18px;border:1px solid #c8d0d8;border-top:none;border-radius:0 0 4px 4px;background:linear-gradient(rgba(255,255,255,0.15),rgba(255,255,255,0.03))"></div>
<div class="a" style="left:337px;top:469px;width:1px;height:17px;background:#c0c8d0"></div>
<div class="a" style="left:364px;top:469px;width:1px;height:17px;background:#c0c8d0"></div>
<div class="a" style="left:318px;top:476px;width:11px;height:5px;background:#fff;border:1px solid #444"></div>
<div class="a" style="left:345px;top:473px;width:12px;height:9px;border:2px solid #b8c2cc;outline:1px solid #6a7480"></div>
<div class="t" style="left:382px;top:471px;font-size:13px;font-weight:bold;color:#fff">&#x2715;</div>
<!-- group boxes -->
<div class="a" style="left:129px;top:511px;width:135px;height:82px;border:1px solid #8a8a8a;box-shadow:1px 1px 0 #eee inset"></div>
<div class="a" style="left:270px;top:511px;width:134px;height:82px;border:1px solid #8a8a8a;box-shadow:1px 1px 0 #eee inset"></div>
<div class="t s92" style="left:136px;top:507px;font-size:11.5px;background:#c4c4c4;padding:0 2px;color:#111">Absolute:World</div>
<div class="t s92" style="left:277px;top:507px;font-size:11.5px;background:#c4c4c4;padding:0 2px;color:#111">Offset:Screen</div>
<div class="t" style="left:144px;top:527px;font-size:11.5px;color:#222">X:</div>
<div class="a" style="left:158px;top:525px;width:79px;height:15px;background:#e4e4e4;border-top:2px solid #111;border-left:2px solid #111;border-right:1px solid #f4f4f4;border-bottom:1px solid #f4f4f4"></div>
<div class="t" style="left:161px;top:528px;font-size:11.5px;color:#999">0.0</div>
<div class="a" style="left:240px;top:524px;width:11px;height:16px;background:#c8c8c8;border:1px solid #f4f4f4;border-right-color:#555;border-bottom-color:#555;box-shadow:inset 0 -7px 0 -6px #888"></div>
<div class="a" style="left:242px;top:528px;width:0;height:0;border-left:3.5px solid transparent;border-right:3.5px solid transparent;border-bottom:4px solid #111"></div>
<div class="a" style="left:242px;top:534px;width:0;height:0;border-left:3.5px solid transparent;border-right:3.5px solid transparent;border-top:4px solid #111"></div>
<div class="t" style="left:284px;top:527px;font-size:11.5px;color:#222">X:</div>
<div class="a" style="left:297px;top:525px;width:79px;height:15px;background:#e4e4e4;border-top:2px solid #111;border-left:2px solid #111;border-right:1px solid #f4f4f4;border-bottom:1px solid #f4f4f4"></div>
<div class="a" style="left:379px;top:524px;width:11px;height:16px;background:#c8c8c8;border:1px solid #f4f4f4;border-right-color:#555;border-bottom-color:#555;box-shadow:inset 0 -7px 0 -6px #888"></div>
<div class="a" style="left:381px;top:528px;width:0;height:0;border-left:3.5px solid transparent;border-right:3.5px solid transparent;border-bottom:4px solid #111"></div>
<div class="a" style="left:381px;top:534px;width:0;height:0;border-left:3.5px solid transparent;border-right:3.5px solid transparent;border-top:4px solid #111"></div>
<div class="t" style="left:144px;top:548px;font-size:11.5px;color:#222">Y:</div>
<div class="a" style="left:158px;top:546px;width:79px;height:15px;background:#e4e4e4;border-top:2px solid #111;border-left:2px solid #111;border-right:1px solid #f4f4f4;border-bottom:1px solid #f4f4f4"></div>
<div class="t" style="left:161px;top:549px;font-size:11.5px;color:#999">0.0</div>
<div class="a" style="left:240px;top:545px;width:11px;height:16px;background:#c8c8c8;border:1px solid #f4f4f4;border-right-color:#555;border-bottom-color:#555;box-shadow:inset 0 -7px 0 -6px #888"></div>
<div class="a" style="left:242px;top:549px;width:0;height:0;border-left:3.5px solid transparent;border-right:3.5px solid transparent;border-bottom:4px solid #111"></div>
<div class="a" style="left:242px;top:555px;width:0;height:0;border-left:3.5px solid transparent;border-right:3.5px solid transparent;border-top:4px solid #111"></div>
<div class="t" style="left:284px;top:548px;font-size:11.5px;color:#222">Y:</div>
<div class="a" style="left:297px;top:546px;width:79px;height:15px;background:#e4e4e4;border-top:2px solid #111;border-left:2px solid #111;border-right:1px solid #f4f4f4;border-bottom:1px solid #f4f4f4"></div>
<div class="a" style="left:379px;top:545px;width:11px;height:16px;background:#c8c8c8;border:1px solid #f4f4f4;border-right-color:#555;border-bottom-color:#555;box-shadow:inset 0 -7px 0 -6px #888"></div>
<div class="a" style="left:381px;top:549px;width:0;height:0;border-left:3.5px solid transparent;border-right:3.5px solid transparent;border-bottom:4px solid #111"></div>
<div class="a" style="left:381px;top:555px;width:0;height:0;border-left:3.5px solid transparent;border-right:3.5px solid transparent;border-top:4px solid #111"></div>
<div class="t" style="left:144px;top:569px;font-size:11.5px;color:#222">Z:</div>
<div class="a" style="left:158px;top:567px;width:79px;height:15px;background:#e4e4e4;border-top:2px solid #111;border-left:2px solid #111;border-right:1px solid #f4f4f4;border-bottom:1px solid #f4f4f4"></div>
<div class="t" style="left:161px;top:570px;font-size:11.5px;color:#999">0.0</div>
<div class="a" style="left:240px;top:566px;width:11px;height:16px;background:#c8c8c8;border:1px solid #f4f4f4;border-right-color:#555;border-bottom-color:#555;box-shadow:inset 0 -7px 0 -6px #888"></div>
<div class="a" style="left:242px;top:570px;width:0;height:0;border-left:3.5px solid transparent;border-right:3.5px solid transparent;border-bottom:4px solid #111"></div>
<div class="a" style="left:242px;top:576px;width:0;height:0;border-left:3.5px solid transparent;border-right:3.5px solid transparent;border-top:4px solid #111"></div>
<div class="t" style="left:284px;top:569px;font-size:11.5px;color:#222">Z:</div>
<div class="a" style="left:297px;top:567px;width:79px;height:15px;background:#e4e4e4;border-top:2px solid #111;border-left:2px solid #111;border-right:1px solid #f4f4f4;border-bottom:1px solid #f4f4f4"></div>
<div class="a" style="left:379px;top:566px;width:11px;height:16px;background:#c8c8c8;border:1px solid #f4f4f4;border-right-color:#555;border-bottom-color:#555;box-shadow:inset 0 -7px 0 -6px #888"></div>
<div class="a" style="left:381px;top:570px;width:0;height:0;border-left:3.5px solid transparent;border-right:3.5px solid transparent;border-bottom:4px solid #111"></div>
<div class="a" style="left:381px;top:576px;width:0;height:0;border-left:3.5px solid transparent;border-right:3.5px solid transparent;border-top:4px solid #111"></div>
<!-- command panel -->
<div class="a" style="left:1089px;top:93px;width:177px;height:573px;background:#c4c4c4"></div>
<div class="a" style="left:1090px;top:96px;width:28px;height:24px;background:#bcbcbc;border:1px solid #e4e4e4;border-bottom:none;border-radius:3px 3px 0 0;box-shadow:inset -1px 0 0 #a0a0a0"></div>
<div class="a" style="left:1119px;top:95px;width:28px;height:25px;background:#c8c8c8;border:1px solid #e4e4e4;border-bottom:none;border-radius:3px 3px 0 0;box-shadow:inset -1px 0 0 #a0a0a0"></div>
<div class="a" style="left:1148px;top:96px;width:28px;height:24px;background:#bcbcbc;border:1px solid #e4e4e4;border-bottom:none;border-radius:3px 3px 0 0;box-shadow:inset -1px 0 0 #a0a0a0"></div>
<div class="a" style="left:1177px;top:96px;width:28px;height:24px;background:#bcbcbc;border:1px solid #e4e4e4;border-bottom:none;border-radius:3px 3px 0 0;box-shadow:inset -1px 0 0 #a0a0a0"></div>
<div class="a" style="left:1206px;top:96px;width:28px;height:24px;background:#bcbcbc;border:1px solid #e4e4e4;border-bottom:none;border-radius:3px 3px 0 0;box-shadow:inset -1px 0 0 #a0a0a0"></div>
<div class="a" style="left:1235px;top:96px;width:28px;height:24px;background:#bcbcbc;border:1px solid #e4e4e4;border-bottom:none;border-radius:3px 3px 0 0;box-shadow:inset -1px 0 0 #a0a0a0"></div>
<div class="a" style="left:1089px;top:120px;width:180px;height:1px;background:#e8e8e8"></div>
<svg class="a" style="left:1096px;top:100px" width="18" height="18" viewBox="0 0 18 18"><g stroke="#e8a020" stroke-width="1.3"><path d="M9,1 V17 M1,9 H17 M3,3 L15,15 M15,3 L3,15"/></g><circle cx="9" cy="9" r="4" fill="#ffe060" stroke="#e0a020"/></svg>
<svg class="a" style="left:1124px;top:98px" width="20" height="20" viewBox="0 0 20 20"><path d="M3,17 C3,9 9,3 17,3 V8 C12,8 8,12 8,17 Z" fill="#8cc0e8" stroke="#2a5a90" stroke-width="1.2"/><path d="M5,17 C5,10 10,5 17,5" fill="none" stroke="#d8ecf8" stroke-width="1"/><rect x="1" y="1" width="3" height="3" fill="#fff" stroke="#222" stroke-width="0.8"/><rect x="16" y="16" width="3" height="3" fill="#fff" stroke="#222" stroke-width="0.8"/><path d="M3,3 H17 V17" fill="none" stroke="#555" stroke-width="0.6"/></svg>
<svg class="a" style="left:1152px;top:98px" width="20" height="20" viewBox="0 0 20 20"><rect x="7" y="1" width="7" height="6" fill="#eee" stroke="#333"/><path d="M10.5,7 V10 M4,13 L10.5,10 L17,13 M10.5,10 V13" fill="none" stroke="#333"/><rect x="2" y="13" width="4" height="4" fill="#eee" stroke="#333"/><rect x="8.5" y="13" width="4" height="4" fill="#eee" stroke="#333"/><rect x="15" y="13" width="4" height="4" fill="#eee" stroke="#333"/></svg>
<svg class="a" style="left:1181px;top:98px" width="20" height="20" viewBox="0 0 20 20"><circle cx="11" cy="10" r="7.5" fill="#eee" stroke="#222" stroke-width="1.6"/><circle cx="11" cy="10" r="4.5" fill="none" stroke="#333"/><circle cx="11" cy="10" r="1.3" fill="#333"/><path d="M3,5 A9,9 0 0 0 3,15" fill="none" stroke="#999"/></svg>
<svg class="a" style="left:1209px;top:98px" width="22" height="20" viewBox="0 0 22 20"><rect x="2" y="2" width="18" height="12" fill="#f4f4f4" stroke="#222" stroke-width="1.3"/><rect x="7" y="4" width="8" height="8" rx="2" fill="#e8e8e8" stroke="#333"/><path d="M7,17 H15 M11,14 V17" stroke="#222" stroke-width="1.2"/></svg>
<svg class="a" style="left:1238px;top:97px" width="22" height="22" viewBox="0 0 22 22"><path d="M3,19 L15,6" stroke="#a07050" stroke-width="2.6"/><path d="M3,19 L15,6" stroke="#d0a890" stroke-width="1"/><path d="M10,4 L15,1 L20,6 L18,8 L15,6 L13,8 Z" fill="#444" stroke="#222"/></svg>
<div class="a" style="left:1097px;top:126px;width:146px;height:20px;background:#e2e2e2;border-top:2px solid #111;border-left:2px solid #111;border-right:1px solid #f4f4f4;border-bottom:1px solid #f4f4f4"></div>
<div class="a" style="left:1247px;top:127px;width:16px;height:19px;background:#a5163e;border:1px solid #d8d8d8"></div>
<div class="a" style="left:1097px;top:151px;width:167px;height:24px;background:linear-gradient(#e8e8e8,#e0e0e0);border-top:2px solid #555;border-left:2px solid #555;border-right:1px solid #f4f4f4;border-bottom:1px solid #f4f4f4"></div>
<div class="a" style="left:1246px;top:153px;width:17px;height:21px;background:#fafafa"></div>
<div class="a" style="left:1250px;top:161px;width:0;height:0;border-left:5px solid transparent;border-right:5px solid transparent;border-top:5px solid #000"></div>
<div class="t s92" style="left:1100px;top:157px;font-size:11.5px;color:#111">Modifier List</div>
<div class="a" style="left:1097px;top:179px;width:166px;height:127px;background:#e2e2e2;border:1px solid #8c8c8c;border-right-color:#f8f8f8;border-bottom-color:#f8f8f8"></div>
<svg class="a" style="left:1103px;top:312px" width="22" height="20" viewBox="0 0 22 20"><path d="M2,10 H8 M8,6 V14 M8,7 H13 V5 H17 V15 H13 V13 H8" fill="#eee" stroke="#f4f4f4" stroke-width="1.5"/><path d="M8,6 V14 M13,5 V15 H17 V5 Z" fill="none" stroke="#777" stroke-width="0.8"/></svg>
<div class="a" style="left:1130px;top:313px;width:1px;height:17px;background:#777;box-shadow:1px 0 0 #eee"></div>
<div class="a" style="left:1136px;top:310px;width:24px;height:23px;border:1px solid #888;border-right-color:#eee;border-bottom-color:#eee"></div>
<div class="a" style="left:1145px;top:316px;width:2px;height:13px;background:#f4f4f4;box-shadow:0 0 0 1px #999"></div><div class="a" style="left:1150px;top:316px;width:2px;height:13px;background:#f4f4f4;box-shadow:0 0 0 1px #999"></div>
<div class="a" style="left:1166px;top:313px;width:1px;height:17px;background:#777;box-shadow:1px 0 0 #eee"></div>
<svg class="a" style="left:1174px;top:312px" width="18" height="20" viewBox="0 0 18 20"><path d="M2,3 L9,16 L16,3" fill="none" stroke="#eee" stroke-width="2.5"/><path d="M2,3 L9,16 L16,3" fill="none" stroke="#888" stroke-width="0.8"/></svg>
<svg class="a" style="left:1199px;top:312px" width="16" height="20" viewBox="0 0 16 20"><path d="M4,9 A4,5 0 0 0 12,9 V11 A4,5 0 0 1 4,11 Z M4,9 A4,5 0 0 1 12,9" fill="#eee" stroke="#888"/><circle cx="8" cy="5" r="2.2" fill="none" stroke="#888"/></svg>
<div class="a" style="left:1226px;top:313px;width:1px;height:17px;background:#777;box-shadow:1px 0 0 #eee"></div>
<svg class="a" style="left:1236px;top:312px" width="20" height="20" viewBox="0 0 20 20"><rect x="1.5" y="2.5" width="12" height="12" fill="#fafafa" stroke="#1a2a70" stroke-width="1.2"/><rect x="1.5" y="2.5" width="12" height="3" fill="#1a2a70"/><g fill="none" stroke="#222" stroke-dasharray="1.5,1"><rect x="8" y="8" width="5" height="5"/><rect x="13" y="8" width="5" height="5"/><rect x="8" y="13" width="5" height="5"/><rect x="13" y="13" width="5" height="5"/></g></svg>
<div class="a" style="left:1093px;top:344px;width:174px;height:4px;background:#0a0a0a;border-top:1px solid #f0f0f0"></div>
<div class="a" style="left:1092px;top:354px;width:175px;height:306px;background:#bababa;border:1px solid #9a9a9a;border-right-color:#eaeaea;border-bottom-color:#eaeaea"></div>
<!-- timeline -->
<div class="a" style="left:8px;top:620px;width:1263px;height:46px;background:#c8c8c8"></div>
<!-- status bar -->
<div class="a" style="left:50px;top:612px;width:1036px;height:6px;background:linear-gradient(#c0c0c0 0,#c0c0c0 1px,#8c8c84 1px,#8a8a74)"></div>
<svg class="a" style="left:0;top:0" width="1280" height="720" viewBox="0 0 1280 720"><g stroke="#555" stroke-width="1"><path d="M84.5,613 V617"/><path d="M141.5,613 V617"/><path d="M198.5,613 V617"/><path d="M255.5,613 V617"/><path d="M312.5,613 V617"/><path d="M369.5,613 V617"/><path d="M426.5,613 V617"/><path d="M483.5,613 V617"/><path d="M540.5,613 V617"/><path d="M597.5,613 V617"/><path d="M654.5,613 V617"/><path d="M711.5,613 V617"/><path d="M768.5,613 V617"/><path d="M825.5,613 V617"/><path d="M882.5,613 V617"/><path d="M939.5,613 V617"/><path d="M996.5,613 V617"/><path d="M1053.5,613 V617"/></g></svg>
<div class="a" style="left:8px;top:620px;width:40px;height:46px;background:#c9c9c9;border-bottom:1px solid #6a6a6a"></div>
<div class="a" style="left:48px;top:620px;width:1041px;height:19px;background:#c6c6c6"></div>
<div class="a" style="left:928px;top:620px;width:16px;height:17px;background:#c4c4c4;border:1px solid #e8e8e8;border-right-color:#999;border-bottom-color:#999"></div>
<div class="t" style="left:932px;top:622px;font-size:12px;color:#222">&lt;</div>
<div class="a" style="left:945px;top:620px;width:124px;height:18px;background:#c8c8c8;border:1px solid #e8e8e8;border-right:2px solid #222;border-bottom:2px solid #222"></div>
<div class="t s92" style="left:983px;top:623px;font-size:11.5px;color:#111">100 / 100</div>
<div class="a" style="left:1070px;top:620px;width:15px;height:17px;background:#c4c4c4;border:1px solid #e8e8e8;border-right-color:#999;border-bottom-color:#999"></div>
<div class="t" style="left:1073px;top:622px;font-size:12px;color:#222">&gt;</div>
<div class="a" style="left:48px;top:638px;width:1041px;height:1px;background:#f4f4f4"></div>
<div class="a" style="left:48px;top:639px;width:1041px;height:27px;background:#c8c8c8"></div>
<div class="a" style="left:98px;top:639px;width:991px;height:26px;background:#d2d2d2;border-bottom:1px solid #f0f0f0"></div>
<svg class="a" style="left:0;top:0" width="1280" height="720" viewBox="0 0 1280 720"><g stroke="#585858" stroke-width="1"><path d="M102.5,640 V664" /><path d="M111.8,640 V650.5" /><path d="M121.1,640 V650.5" /><path d="M130.5,640 V650.5" /><path d="M139.8,640 V650.5" /><path d="M149.1,640 V664" /><path d="M158.4,640 V650.5" /><path d="M167.7,640 V650.5" /><path d="M177.1,640 V650.5" /><path d="M186.4,640 V650.5" /><path d="M195.7,640 V664" /><path d="M205.0,640 V650.5" /><path d="M214.3,640 V650.5" /><path d="M223.7,640 V650.5" /><path d="M233.0,640 V650.5" /><path d="M242.3,640 V664" /><path d="M251.6,640 V650.5" /><path d="M260.9,640 V650.5" /><path d="M270.3,640 V650.5" /><path d="M279.6,640 V650.5" /><path d="M288.9,640 V664" /><path d="M298.2,640 V650.5" /><path d="M307.5,640 V650.5" /><path d="M316.9,640 V650.5" /><path d="M326.2,640 V650.5" /><path d="M335.5,640 V664" /><path d="M344.8,640 V650.5" /><path d="M354.1,640 V650.5" /><path d="M363.5,640 V650.5" /><path d="M372.8,640 V650.5" /><path d="M382.1,640 V664" /><path d="M391.4,640 V650.5" /><path d="M400.7,640 V650.5" /><path d="M410.1,640 V650.5" /><path d="M419.4,640 V650.5" /><path d="M428.7,640 V664" /><path d="M438.0,640 V650.5" /><path d="M447.3,640 V650.5" /><path d="M456.7,640 V650.5" /><path d="M466.0,640 V650.5" /><path d="M475.3,640 V664" /><path d="M484.6,640 V650.5" /><path d="M493.9,640 V650.5" /><path d="M503.3,640 V650.5" /><path d="M512.6,640 V650.5" /><path d="M521.9,640 V664" /><path d="M531.2,640 V650.5" /><path d="M540.5,640 V650.5" /><path d="M549.9,640 V650.5" /><path d="M559.2,640 V650.5" /><path d="M568.5,640 V664" /><path d="M577.8,640 V650.5" /><path d="M587.1,640 V650.5" /><path d="M596.5,640 V650.5" /><path d="M605.8,640 V650.5" /><path d="M615.1,640 V664" /><path d="M624.4,640 V650.5" /><path d="M633.7,640 V650.5" /><path d="M643.1,640 V650.5" /><path d="M652.4,640 V650.5" /><path d="M661.7,640 V664" /><path d="M671.0,640 V650.5" /><path d="M680.3,640 V650.5" /><path d="M689.7,640 V650.5" /><path d="M699.0,640 V650.5" /><path d="M708.3,640 V664" /><path d="M717.6,640 V650.5" /><path d="M726.9,640 V650.5" /><path d="M736.3,640 V650.5" /><path d="M745.6,640 V650.5" /><path d="M754.9,640 V664" /><path d="M764.2,640 V650.5" /><path d="M773.5,640 V650.5" /><path d="M782.9,640 V650.5" /><path d="M792.2,640 V650.5" /><path d="M801.5,640 V664" /><path d="M810.8,640 V650.5" /><path d="M820.1,640 V650.5" /><path d="M829.5,640 V650.5" /><path d="M838.8,640 V650.5" /><path d="M848.1,640 V664" /><path d="M857.4,640 V650.5" /><path d="M866.7,640 V650.5" /><path d="M876.1,640 V650.5" /><path d="M885.4,640 V650.5" /><path d="M894.7,640 V664" /><path d="M904.0,640 V650.5" /><path d="M913.3,640 V650.5" /><path d="M922.7,640 V650.5" /><path d="M932.0,640 V650.5" /><path d="M941.3,640 V664" /><path d="M950.6,640 V650.5" /><path d="M959.9,640 V650.5" /><path d="M969.3,640 V650.5" /><path d="M978.6,640 V650.5" /><path d="M987.9,640 V664" /><path d="M997.2,640 V650.5" /><path d="M1006.5,640 V650.5" /><path d="M1015.9,640 V650.5" /><path d="M1025.2,640 V650.5" /><path d="M1034.5,640 V664" /></g></svg>
<div class="a" style="left:1030px;top:640px;width:9px;height:25px;background:rgba(120,170,220,0.55);border:1px solid #7aa0c8"></div>
<div class="t" style="left:98.4px;top:653px;font-size:11px;color:#111;padding:0 1px">0</div>
<div class="t" style="left:145.0px;top:653px;font-size:11px;color:#111;padding:0 1px">5</div>
<div class="t" style="left:188.5px;top:653px;font-size:11px;color:#111;padding:0 1px">10</div>
<div class="t" style="left:235.1px;top:653px;font-size:11px;color:#111;padding:0 1px">15</div>
<div class="t" style="left:281.7px;top:653px;font-size:11px;color:#111;padding:0 1px">20</div>
<div class="t" style="left:328.3px;top:653px;font-size:11px;color:#111;padding:0 1px">25</div>
<div class="t" style="left:374.9px;top:653px;font-size:11px;color:#111;padding:0 1px">30</div>
<div class="t" style="left:421.5px;top:653px;font-size:11px;color:#111;padding:0 1px">35</div>
<div class="t" style="left:468.1px;top:653px;font-size:11px;color:#111;padding:0 1px">40</div>
<div class="t" style="left:514.7px;top:653px;font-size:11px;color:#111;padding:0 1px">45</div>
<div class="t" style="left:561.3px;top:653px;font-size:11px;color:#111;padding:0 1px">50</div>
<div class="t" style="left:607.9px;top:653px;font-size:11px;color:#111;padding:0 1px">55</div>
<div class="t" style="left:654.5px;top:653px;font-size:11px;color:#111;padding:0 1px">60</div>
<div class="t" style="left:701.1px;top:653px;font-size:11px;color:#111;padding:0 1px">65</div>
<div class="t" style="left:747.7px;top:653px;font-size:11px;color:#111;padding:0 1px">70</div>
<div class="t" style="left:794.3px;top:653px;font-size:11px;color:#111;padding:0 1px">75</div>
<div class="t" style="left:840.9px;top:653px;font-size:11px;color:#111;padding:0 1px">80</div>
<div class="t" style="left:887.5px;top:653px;font-size:11px;color:#111;padding:0 1px">85</div>
<div class="t" style="left:934.1px;top:653px;font-size:11px;color:#111;padding:0 1px">90</div>
<div class="t" style="left:980.7px;top:653px;font-size:11px;color:#111;padding:0 1px">95</div>
<div class="t" style="left:1024.2px;top:653px;font-size:11px;color:#111;padding:0 1px">100</div>
<svg class="a" style="left:60px;top:643px" width="20" height="19" viewBox="0 0 20 19"><rect x="1.5" y="1.5" width="16" height="5" fill="#fafafa" stroke="#222"/><path d="M4,4 Q7,2 9,4 T15,4" fill="none" stroke="#222" stroke-width="0.8"/><path d="M5,9 V13 M3,10.5 L5,8.5 L7,10.5 M14,8 V12 M12,10.5 L14,12.5 L16,10.5" fill="none" stroke="#222" stroke-width="1"/><rect x="1.5" y="14.5" width="16" height="3" fill="#fafafa" stroke="#222"/></svg>
<div class="a" style="left:8px;top:666px;width:1263px;height:48px;background:#bebebe;border-top:1px solid #a8a8a8"></div>
<div class="a" style="left:10px;top:668px;width:97px;height:21px;background:#dcc4c0;border:1px solid #8a8a8a;border-right-color:#f0f0f0;border-bottom-color:#f0f0f0"></div>
<div class="a" style="left:10px;top:690px;width:97px;height:22px;background:#fcfcfc;border:1px solid #8a8a8a;border-right-color:#f0f0f0;border-bottom-color:#f0f0f0"></div>
<div class="t" style="left:15px;top:695px;font-family:'Liberation Mono',monospace;font-size:12px;color:#202040;width:87px;overflow:hidden">"Dist: 0.255m</div>
<div class="a" style="left:110px;top:667px;width:1px;height:48px;background:#999;box-shadow:1px 0 0 #eee,3px 0 0 #999,4px 0 0 #eee"></div>
<div class="a" style="left:115px;top:669px;width:312px;height:21px;background:#c2c2c2;border:1px solid #8a8a8a;border-right-color:#eee;border-bottom-color:#eee"></div>
<div class="t s92" style="left:120px;top:674px;font-size:11.5px;color:#111">None Selected</div>
<div class="a" style="left:113px;top:694px;width:588px;height:1px;background:#5a5a5a"></div>
<div class="t s92" style="left:120px;top:699px;font-size:11.5px;color:#111">Objects Un-isolated</div>
<svg class="a" style="left:432px;top:671px" width="14" height="17" viewBox="0 0 14 17"><path d="M3,8 V5 A4,4 0 0 1 11,5 V8" fill="none" stroke="#999" stroke-width="1.5"/><rect x="1.5" y="8" width="11" height="8" fill="#c8c8c8" stroke="#999"/><path d="M7,11 v2" stroke="#999"/></svg>
<svg class="a" style="left:458px;top:670px" width="17" height="17" viewBox="0 0 17 17"><rect x="1" y="1" width="15" height="15" fill="#eef0f4" stroke="#222" stroke-width="1.3"/><circle cx="8.5" cy="8.5" r="3.5" fill="#fff" stroke="#222" stroke-width="1.2"/><path d="M8.5,1 V5 M8.5,12 V16 M1,8.5 H5 M12,8.5 H16" stroke="#222" stroke-width="1.2"/></svg>
<div class="t" style="left:483px;top:674px;font-size:11.5px;color:#111">X:</div>
<div class="a" style="left:494px;top:670px;width:57px;height:20px;background:#e0e0e0;border-top:2px solid #111;border-left:2px solid #111;border-right:1px solid #f4f4f4;border-bottom:1px solid #f4f4f4;overflow:hidden"><div class="t" style="left:2px;top:3px;font-size:11.5px;color:#888">1234.031m</div></div>
<div class="t" style="left:564px;top:674px;font-size:11.5px;color:#111">Y:</div>
<div class="a" style="left:576px;top:670px;width:57px;height:20px;background:#e0e0e0;border-top:2px solid #111;border-left:2px solid #111;border-right:1px solid #f4f4f4;border-bottom:1px solid #f4f4f4;overflow:hidden"><div class="t" style="left:2px;top:3px;font-size:11.5px;color:#888">-239.021m</div></div>
<div class="t" style="left:645px;top:674px;font-size:11.5px;color:#111">Z:</div>
<div class="a" style="left:657px;top:670px;width:57px;height:20px;background:#e0e0e0;border-top:2px solid #111;border-left:2px solid #111;border-right:1px solid #f4f4f4;border-bottom:1px solid #f4f4f4;overflow:hidden"><div class="t" style="left:2px;top:3px;font-size:11.5px;color:#888">0.0m</div></div>
<div class="a" style="left:729px;top:669px;width:99px;height:21px;background:#c4c4c4;border:1px solid #8a8a8a;border-right-color:#eee;border-bottom-color:#eee"></div>
<div class="t s92" style="left:735px;top:674px;font-size:11.5px;color:#111">Grid = 10.0m</div>
<div class="a" style="left:729px;top:692px;width:99px;height:21px;background:#c4c4c4;border:1px solid #8a8a8a;border-right-color:#eee;border-bottom-color:#eee"></div>
<div class="t s92" style="left:735px;top:698px;font-size:11.5px;color:#111">Add Time Tag</div>
<div class="a" style="left:704px;top:693px;width:23px;height:21px;background:#6ad4e8;border:1px solid #38a0b8"></div>
<svg class="a" style="left:707px;top:695px" width="17" height="17" viewBox="0 0 17 17"><path d="M3,6 L6,3 H14 V11 L11,14 H3 Z" fill="#f4f4f4" stroke="#222" stroke-width="1.2"/><path d="M3,6 H11 V14 M11,6 L14,3" fill="none" stroke="#222"/></svg>
<div class="a" style="left:832px;top:668px;width:45px;height:46px;background:#c4c4c4;border:1px solid #eee;border-right-color:#888;border-bottom-color:#888"></div>
<svg class="a" style="left:841px;top:681px" width="28" height="14" viewBox="0 0 28 14"><circle cx="5.5" cy="7" r="4" fill="none" stroke="#111" stroke-width="2.2"/><path d="M9,7 H25 M18,7 V11 M22,7 V11" stroke="#111" stroke-width="2.4"/></svg>
<div class="a" style="left:880px;top:668px;width:47px;height:21px;background:#c4c4c4;border:1px solid #eee;border-right-color:#888;border-bottom-color:#888"></div>
<div class="t s92" style="left:881px;top:674px;font-size:11.5px;color:#111">Auto Key</div>
<div class="a" style="left:880px;top:691px;width:47px;height:22px;background:#c4c4c4;border:1px solid #eee;border-right-color:#888;border-bottom-color:#888"></div>
<div class="t s92" style="left:884px;top:696px;font-size:11.5px;color:#111">Set Key</div>
<div class="a" style="left:930px;top:668px;width:116px;height:21px;background:linear-gradient(#fafafa,#e2e2e2);border-top:2px solid #555;border-left:2px solid #555;border-right:1px solid #f4f4f4;border-bottom:1px solid #f4f4f4"></div>
<div class="t s92" style="left:933px;top:673px;font-size:11.5px;color:#111">Selected</div>
<div class="a" style="left:1032px;top:677px;width:0;height:0;border-left:4px solid transparent;border-right:4px solid transparent;border-top:4px solid #000"></div>
<svg class="a" style="left:931px;top:692px" width="22" height="20" viewBox="0 0 22 20"><path d="M2,15 C5,15 6,3 9,3 C12,3 12,15 15,15 C17,15 18,6 19,4" fill="none" stroke="#c83040" stroke-width="1.2"/><path d="M1,10 H20" stroke="#a0a0a0" stroke-width="0.6" stroke-dasharray="1,1"/><path d="M18,19 l3,0 l0,-3 z" fill="#000"/></svg>
<div class="a" style="left:957px;top:691px;width:89px;height:22px;background:#c4c4c4;border:1px solid #eee;border-right-color:#888;border-bottom-color:#888"></div>
<div class="t s92" style="left:968px;top:696px;font-size:11.5px;color:#111">Key Filters...</div>

<div class="a" style="left:1048px;top:667px;width:223px;height:1px;background:#999;box-shadow:0 1px 0 #eee"></div>
<svg class="a" style="left:1052px;top:670px" width="220" height="18" viewBox="0 0 220 18"><g fill="#222"><rect x="2" y="2" width="2.5" height="13"/><path d="M4,8.5 L11,3 V14 Z M10,8.5 L17,3 V14 Z"/><path d="M28,8.5 L35,3 V14 Z"/><rect x="36" y="3" width="2.5" height="11" rx="1"/><rect x="40" y="3" width="2.5" height="11" rx="1"/><rect x="44" y="3" width="2.5" height="11" rx="1"/><path d="M54,3 L64,8.5 L54,14 Z"/><rect x="74" y="3" width="2.5" height="11" rx="1"/><rect x="78" y="3" width="2.5" height="11" rx="1"/><rect x="82" y="3" width="2.5" height="11" rx="1"/><path d="M85,3 L92,8.5 L85,14 Z"/><path d="M100,3 L107,8.5 L100,14 Z M106,3 L113,8.5 L106,14 Z"/><rect x="113" y="2" width="2.5" height="13"/></g><g stroke="#888"><path d="M23.5,1 V17 M96.5,1 V17 M125.5,1 V17"/></g><g fill="none" stroke="#222" stroke-width="1.3"><circle cx="135" cy="8" r="5" fill="#f4f4f4"/><path d="M139,12 L144,17" stroke-width="2.5"/><path d="M141,3 h4 M143,1 v4" stroke-width="1"/></g><g fill="#f4f4f4" stroke="#222" stroke-width="1.1"><rect x="153" y="2" width="6" height="6"/><rect x="159" y="2" width="6" height="6"/><rect x="153" y="8" width="6" height="6"/><circle cx="163" cy="12" r="3.5"/><path d="M165.5,14.5 L168,17"/></g><g fill="none" stroke="#222" stroke-width="1.1"><path d="M175,6 V2 H179 M187,2 H191 V6 M191,13 V17 H187 M179,17 H175 V13"/><path d="M178,8 L181,5 H188 V12 L185,15 H178 Z" fill="#eee"/></g><g fill="#f4f4f4" stroke="#222" stroke-width="1.1"><rect x="206" y="1" width="6" height="6"/><rect x="206" y="7" width="6" height="6"/><rect x="200" y="1" width="6" height="6"/><path d="M197,9 L200,6 H207 V13 L204,16 H197 Z"/></g></svg>
<div class="a" style="left:1056px;top:692px;width:1px;height:17px;background:#555"></div><div class="a" style="left:1057px;top:698px;width:0;height:0;border-top:4px solid transparent;border-bottom:4px solid transparent;border-left:5px solid #333"></div>
<div class="a" style="left:1077px;top:692px;width:62px;height:20px;background:#f4f4f4;border-top:2px solid #333;border-left:2px solid #333"></div>
<svg class="a" style="left:1150px;top:690px" width="120" height="24" viewBox="0 0 120 24"><g fill="none" stroke="#333" stroke-width="1.1"><path d="M26,4 v6 M23,7 h6"/><path d="M48,3 v14 M45,12 l3,5 l3,-5"/><path d="M72,4 l4,2 v10 l-4,2 z"/><path d="M100,3 l10,10 M105,13 h5 v-5"/><rect x="103" y="10" width="8" height="10"/></g></svg>
<svg class="a" style="left:1040px;top:620px" width="240" height="100" viewBox="1040 620 240 100">
<g fill="none" stroke="#e6e6e6" stroke-width="5.5" stroke-linejoin="round" opacity="0.55"><path d="M1061,641.5 V655 Q1061,659.5 1065,659.5 H1126"/>
 <path d="M1084.3,635 V659.5"/>
 <path d="M1094.4,641.5 V659.5"/>
 <ellipse cx="1119.3" cy="650.6" rx="9.2" ry="8"/>
 <path d="M1136.7,635 V661"/>
 <path d="M1146,641.5 V660 Q1146,665 1143.5,668"/>
 <path d="M1146,659.5 H1171"/>
 <path d="M1153,655 V642 H1165 V659.5"/>
 <path d="M1171,635 V659.5"/>
 <path d="M1178.5,635 V661"/>
 <path d="M1190.5,641 V652 Q1190.5,665 1204,665 Q1214,665 1218,659.5"/>
 <ellipse cx="1203" cy="650.5" rx="5.6" ry="8"/>
 <path d="M1203,659.5 H1250"/>
 <path d="M1218,641 V659.5"/>
 <path d="M1228.5,641 V660 Q1228.5,665 1226,667.5"/>
 <path d="M1237,635.5 V659.5"/>
 <path d="M1238,656 Q1242,641 1249,641 Q1256,641 1256,650 Q1256,659.5 1250,659.5"/>
 <path d="M1071,645 Q1074,643 1072,641 Q1071,639.5 1074,638" stroke-width="1.6"/></g>
<g fill="#e6e6e6" opacity="0.55"><circle cx="1119" cy="637.5" r="3"/><circle cx="1160" cy="665" r="2.9"/><circle cx="1205" cy="637.7" r="2.9"/><circle cx="1210" cy="637.7" r="2.9"/><circle cx="1214.8" cy="665" r="2.8"/><circle cx="1219" cy="665" r="2.8"/><circle cx="1090.5" cy="665" r="2.8"/><circle cx="1094.5" cy="665" r="2.8"/></g>
<g fill="none" stroke="#353535" stroke-width="3.5" stroke-linejoin="round"><path d="M1061,641.5 V655 Q1061,659.5 1065,659.5 H1126"/>
 <path d="M1084.3,635 V659.5"/>
 <path d="M1094.4,641.5 V659.5"/>
 <ellipse cx="1119.3" cy="650.6" rx="9.2" ry="8"/>
 <path d="M1136.7,635 V661"/>
 <path d="M1146,641.5 V660 Q1146,665 1143.5,668"/>
 <path d="M1146,659.5 H1171"/>
 <path d="M1153,655 V642 H1165 V659.5"/>
 <path d="M1171,635 V659.5"/>
 <path d="M1178.5,635 V661"/>
 <path d="M1190.5,641 V652 Q1190.5,665 1204,665 Q1214,665 1218,659.5"/>
 <ellipse cx="1203" cy="650.5" rx="5.6" ry="8"/>
 <path d="M1203,659.5 H1250"/>
 <path d="M1218,641 V659.5"/>
 <path d="M1228.5,641 V660 Q1228.5,665 1226,667.5"/>
 <path d="M1237,635.5 V659.5"/>
 <path d="M1238,656 Q1242,641 1249,641 Q1256,641 1256,650 Q1256,659.5 1250,659.5"/>
 <path d="M1071,645 Q1074,643 1072,641 Q1071,639.5 1074,638" stroke-width="1.6"/></g>
<g fill="#353535"><circle cx="1119" cy="637.5" r="2"/><circle cx="1160" cy="665" r="1.9"/><circle cx="1205" cy="637.7" r="1.9"/><circle cx="1210" cy="637.7" r="1.9"/><circle cx="1214.8" cy="665" r="1.8"/><circle cx="1219" cy="665" r="1.8"/><circle cx="1090.5" cy="665" r="1.8"/><circle cx="1094.5" cy="665" r="1.8"/></g>
<text x="1058" y="707" font-family="Liberation Sans" font-size="22" fill="#383838" stroke="#383838" stroke-width="1.1" textLength="200" lengthAdjust="spacingAndGlyphs">WWW.CGWAY.NET</text>
</svg>
</body></html>
